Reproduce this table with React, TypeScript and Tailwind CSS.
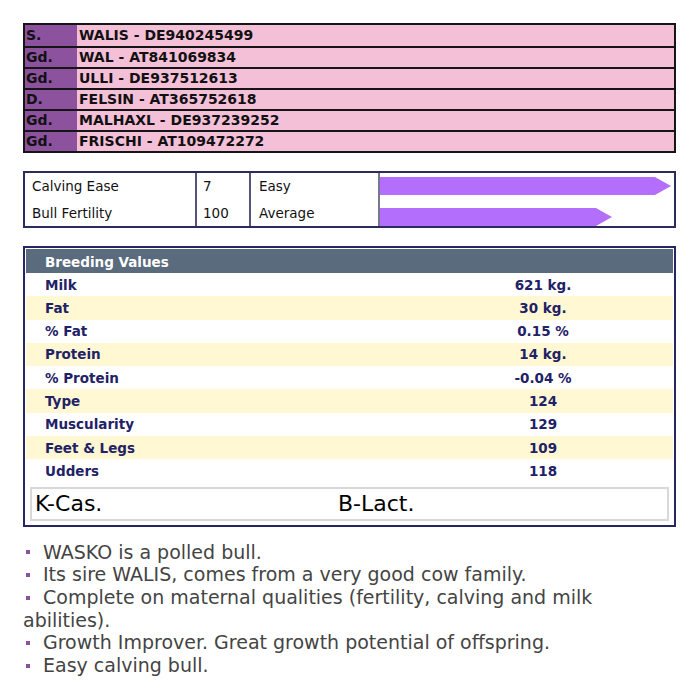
const pedigree = [
  ["S.", "WALIS - DE940245499"],
  ["Gd.", "WAL - AT841069834"],
  ["Gd.", "ULLI - DE937512613"],
  ["D.", "FELSIN - AT365752618"],
  ["Gd.", "MALHAXL - DE937239252"],
  ["Gd.", "FRISCHI - AT109472272"],
];

const breeding = [
  ["Milk", "621 kg."],
  ["Fat", "30 kg."],
  ["% Fat", "0.15 %"],
  ["Protein", "14 kg."],
  ["% Protein", "-0.04 %"],
  ["Type", "124"],
  ["Muscularity", "129"],
  ["Feet & Legs", "109"],
  ["Udders", "118"],
];

const notes = [
  "WASKO is a polled bull.",
  "Its sire WALIS, comes from a very good cow family.",
  "Complete on maternal qualities (fertility, calving and milk abilities).",
  "Growth Improver. Great growth potential of offspring.",
  "Easy calving bull.",
];

function Arrow({ body }: { body: number }) {
  return (
    <svg width={body + 16} height="18" className="block">
      <polygon points={`0,0 ${body},0 ${body + 16},9 ${body},18 0,18`} fill="#b36ffb" />
    </svg>
  );
}

export default function App() {
  return (
    <div className="w-[695px] h-[693px] bg-white pt-[23px] pl-[23px] font-['DejaVu_Sans',Verdana,sans-serif]">
      <div className="w-[653px] border-2 border-[#151515] bg-[#f4c0d8]">
        {pedigree.map(([rel, name], i) => (
          <div key={i} className={`flex h-[21px] items-center ${i > 0 ? "border-t-2 border-[#151515]" : ""}`}>
            <div className="w-[52px] h-full flex items-center bg-[#8c529e] text-[14px] font-bold text-[#111] pl-[1px]">{rel}</div>
            <div className="flex-1 text-[14px] font-bold text-[#111] pl-[2px]">{name}</div>
          </div>
        ))}
      </div>

      <div className="mt-[18px] w-[653px] h-[57px] border-2 border-[#2b2b5c] flex text-[13.5px] text-[#111]">
        <div className="w-[172px] border-r-2 border-[#55557a] pl-[7px] leading-[27px]">
          <div>Calving Ease</div>
          <div>Bull Fertility</div>
        </div>
        <div className="w-[54px] border-r-2 border-[#55557a] pl-[6px] leading-[27px]">
          <div>7</div>
          <div>100</div>
        </div>
        <div className="w-[129px] border-r-2 border-[#77778f] pl-[8px] leading-[27px]">
          <div>Easy</div>
          <div>Average</div>
        </div>
        <div className="flex-1 pt-[4px] flex flex-col gap-[13px]">
          <Arrow body={275} />
          <Arrow body={216} />
        </div>
      </div>

      <div className="mt-[18px] w-[653px] border-2 border-[#262660] p-[1px] pb-[4px]">
        <div className="h-[24px] bg-[#5a6b7e] text-white font-bold text-[13.5px] leading-[26px] pl-[19px]">Breeding Values</div>
        {breeding.map(([label, value], i) => (
          <div key={i} className={`flex h-[23.3px] items-center text-[13.5px] font-bold text-[#1f2266] ${i % 2 === 1 ? "bg-[#fff8d2]" : "bg-white"}`}>
            <div className="w-[397px] pl-[19px]">{label}</div>
            <div className="w-[240px] text-center">{value}</div>
          </div>
        ))}
        <div className="mx-[4px] mt-[4px] h-[34px] border-2 border-[#d8d8d8] flex items-center text-[22px] text-black">
          <div className="w-[306px] pl-[3px]">K-Cas.</div>
          <div>B-Lact.</div>
        </div>
      </div>

      <ul className="mt-[14px] w-[645px] text-[19px] leading-[22.7px] text-[#444]">
        {notes.map((n, i) => (
          <li key={i}>
            <span className="inline-block w-[4px] h-[4px] bg-[#8c529e] align-middle ml-[3px] mr-[13px] -mt-[2px]" />
            {n}
          </li>
        ))}
      </ul>
    </div>
  );
}
